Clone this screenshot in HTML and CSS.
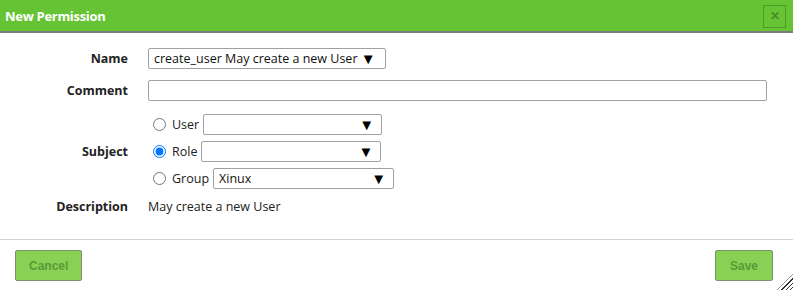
FILE: index.html
```html
<!DOCTYPE html>
<html lang="en">
<head>
  <meta charset="UTF-8" />
  <title>New Permission</title>
  <link rel="stylesheet" href="styles.css">
</head>
<body>
  <div class="dialog">
    <!-- Title bar -->
    <div class="titlebar">
      <span class="title">New Permission</span>
      <button class="close">&#x2715;</button>
    </div>

    <!-- Form -->
    <div class="content">
      <div class="row">
        <label class="label">Name</label>
        <div class="select name-select">create_user May create a new User&nbsp;<span class="arrow">&#9660;</span></div>
      </div>
      <div class="row">
        <label class="label">Comment</label>
        <input class="text-input" type="text" />
      </div>
      <div class="row subject-row">
        <label class="label">Subject</label>
        <div class="choices">
          <div class="choice">
            <input type="radio" name="subject" id="s-user" />
            <label for="s-user">User</label>
            <div class="select user-select"><span></span><span class="arrow">&#9660;</span></div>
          </div>
          <div class="choice">
            <input type="radio" name="subject" id="s-role" checked />
            <label for="s-role">Role</label>
            <div class="select role-select"><span></span><span class="arrow">&#9660;</span></div>
          </div>
          <div class="choice">
            <input type="radio" name="subject" id="s-group" />
            <label for="s-group">Group</label>
            <div class="select group-select"><span>Xinux</span><span class="arrow">&#9660;</span></div>
          </div>
        </div>
      </div>
      <div class="row">
        <label class="label">Description</label>
        <span class="value">May create a new User</span>
      </div>
    </div>

    <!-- Buttons -->
    <div class="footer">
      <button class="btn">Cancel</button>
      <button class="btn">Save</button>
    </div>
    <div class="grip"></div>
  </div>
</body>
</html>
```

FILE: styles.css
```css
body {
  margin: 0;
  font-family: 'Open Sans', 'Noto Sans', sans-serif;
  font-size: 12.5px;
  color: #222;
  background: #fff;
}

.dialog {
  position: relative;
  width: 793px;
  height: 290px;
  overflow: hidden;
}

/* Green title bar */
.titlebar {
  height: 33px;
  background: #66c434;
  border-bottom: 2px solid #7b7b7b;
  box-sizing: border-box;
  display: flex;
  align-items: center;
  justify-content: space-between;
  padding: 0 7px 0 5px;
}

.title {
  color: #fff;
  font-weight: bold;
  font-size: 13px;
  letter-spacing: -0.3px;
}

.close {
  width: 23px;
  height: 23px;
  margin-top: 1px;
  padding: 0;
  background: #66c434;
  border: 1px solid #4f9a28;
  color: #4a8a2a;
  font-size: 12px;
  font-weight: bold;
  line-height: 20px;
}

.content {
  padding: 15px 0 0;
}

.row {
  display: flex;
  align-items: center;
  margin-bottom: 11px;
}

.label {
  width: 128px;
  text-align: right;
  font-weight: bold;
  margin-right: 20px;
  color: #222;
}

.select {
  height: 21px;
  box-sizing: border-box;
  border: 1px solid #a0a0a0;
  border-radius: 2px;
  display: flex;
  align-items: center;
  justify-content: space-between;
  padding: 0 7px 0 5px;
  color: #111;
  background: #fff;
}

.arrow {
  font-size: 15px;
  line-height: 1;
  color: #000;
}

.name-select {
  width: 238px;
  justify-content: flex-start;
}

.text-input {
  width: 619px;
  height: 21px;
  box-sizing: border-box;
  border: 1px solid #a0a0a0;
  border-radius: 2px;
  margin: 0;
}

.subject-row {
  padding-top: 2px;
  margin-bottom: 9px;
}

.choices {
  display: flex;
  flex-direction: column;
  gap: 6px;
  margin-left: 3px;
}

.choice {
  display: flex;
  align-items: center;
}

.choice input {
  width: 13px;
  height: 13px;
  margin: 0 6px 0 2px;
}

.choice label {
  margin-right: 4px;
}

.user-select {
  width: 179px;
}

.role-select {
  width: 180px;
}

.group-select {
  width: 181px;
}

.value {
  color: #222;
}

.footer {
  position: absolute;
  left: 0;
  right: 0;
  top: 239px;
  border-top: 1px solid #d4d4d4;
  display: flex;
  justify-content: space-between;
  padding: 10px 20px 0 15px;
}

.btn {
  height: 31px;
  padding: 0 13px;
  background: #88d155;
  border: 1px solid #7e8f72;
  border-radius: 2px;
  color: #5a9a35;
  font-family: 'Liberation Sans', Arial, sans-serif;
  font-weight: bold;
  font-size: 12px;
}

.btn + .btn {
  padding: 0 14px;
}

/* Resize grip in the corner */
.grip {
  position: absolute;
  right: 0;
  bottom: 0;
  width: 16px;
  height: 16px;
  background: repeating-linear-gradient(135deg, transparent 0 2px, #333 2px 3px);
  clip-path: polygon(100% 0, 100% 100%, 0 100%);
}
```
